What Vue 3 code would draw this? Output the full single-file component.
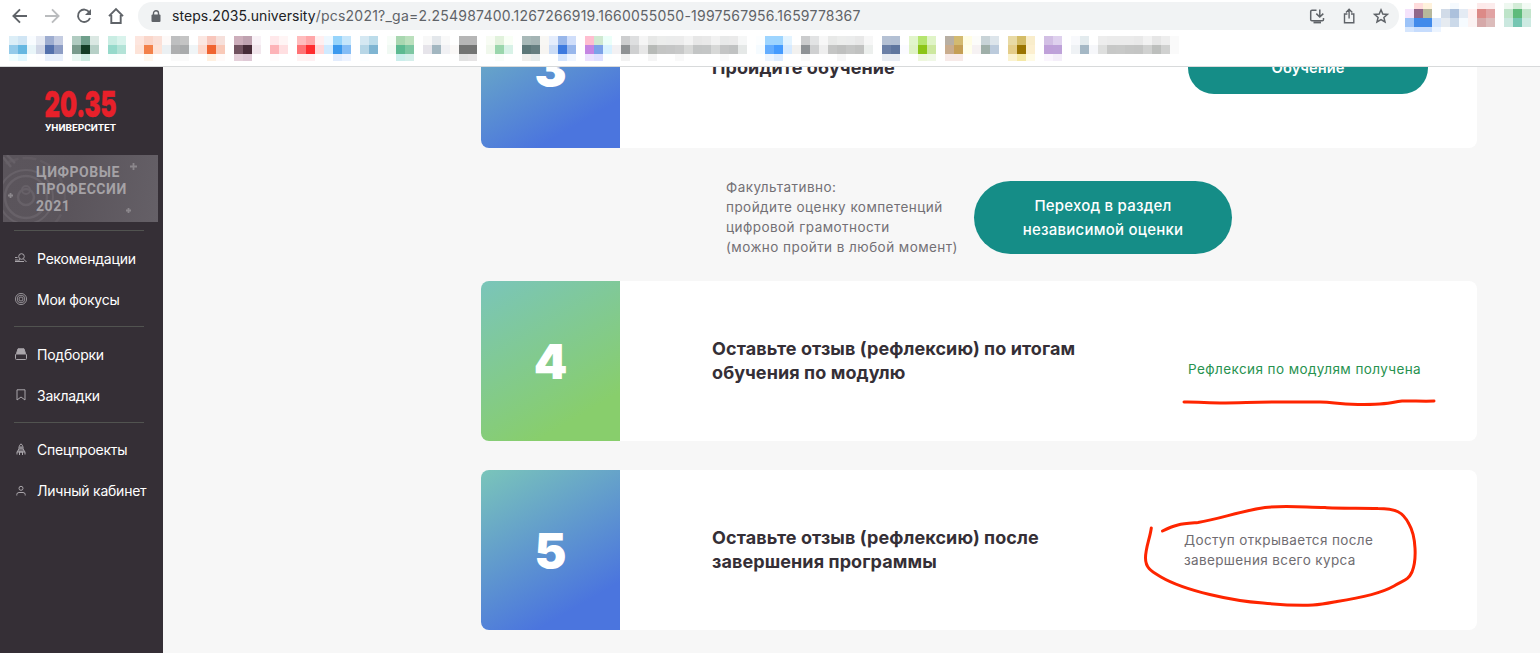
<script setup>
// Each entry: column index, then the colours of its rows ('-' is an empty cell).
const bookmarks = `1 dceef7 94cbea f0feff|2 d0e5f4 66b7e1 e1f7ff|3 f9fcff e9f5f9|4 e5e9f2 d0d6e6 fdfdff|5 9eadd0 5471ad e7effc|6 c5cde2 8d9dc5 e8effb|8 b1ccc1 799b8c e9f7f2|9 70a08c 133d25 cdebe1|10 dbe8e3 b7d0c7|12 c9ede3 96dacb f8fffd|13 d9f3ec b3e3d7 fafffd|15 fde6df fde3d8|16 fad6ca f3814a fff7ee|17 fae0d8 fde3d8|18 fdf9f8 ebf0f3|19 bebfc0 aeafb0 fafafa|20 c4c4c4 a9abac fafafa|21 ffffff f0f5f7|22 fbe7e2 fdd9cd|23 f8c6bb f06430 fff0e0|24 f6e0db f9c9b8 fffaf9|26 cdaebb 715360 e5d0da|27 bfa2b0 472c38 dfc9d6|28 f9f2f7 f2e7ed|30 ffe8ea fdb3b7 fffbfb|31 fff5f5 ffdfe1|33 ffbcbd ff7274 fff2f2|34 ffa6a8 ff2c2e fff0f2|35 ffeff0 ffd9da|36 eef8ff cfeaff|37 96d4fb 3b99ee e2ecfd|38 c6e6fb 84bdf6 edf3ff|40 d5e8f2 b6d6e6 fbfeff|41 bcdcea 7fb5d2|43 f7fdf8 f0f9f3|44 a8d7b0 5cba91 cbeeec|45 bbe0bd 7dc7a2 d5efeb|47 f8f8f8 e6e4ea|48 e3e7eb a2b6c0|49 f9f9f9 f1f1f4|50 ffffff faf8f7|51 b6b6b6 737473 e2e2e2|52 b6b6b6 737473 e6e4e5|54 f8fcf4 f0f8ec|55 e1f2dc 9ad6ac f9fdf9|56 f9fff6 d8f2e7|58 a8b9b8 5c7778 efeeec|59 a4b4b4 657e80 e5ebeb|60 f8f7f4 f7f5f2|61 e5edfc cbdcf6|62 99b7ea 3d7adf d5e5fd|63 d0defa 98b7ec f0f6ff|65 ffbed0 c585e2 ece2fe|66 cfe9d1 7ca2e8 dfe0ff|67 ecfff9 d9f2ff fdffff|68 ffffff f3f1f3|69 cdcecf 8f9294 f2f2f2|70 dedfe0 cfd0d1|71 f5f5f5 e7e7e7|72 e7e8e7 b7bab7 f5f5f5|73 ecedec c4c5c4|74 ebecec c5c6c6|75 ececec c8c9c9 f9f9f9|76 f3f3f3 d8d9d8|77 e7e7e7 c3c5c5|78 e9e9e9 c4c6c6|79 f2f2f2 d7d8d7|80 e8e9e9 c4c5c5 fafafa|81 eaeaea c0c2c2|82 f6f7f7 e5e8e7|84 fcfeff f5fbff|85 9ed5ff 63adff ebf4ff|86 9dd5ff 449bff ddecff|87 e4f4ff d6eaff|88 ffffff f2f1ef|89 cbcccd 8e9295 f9f9f9|90 e2e3e4 cfd0d1|91 f7f7f7 eeeeee|92 e8e9e8 c4c5c4|93 ecedec bfc0bf f7f7f7|94 ebecec c5c6c5|95 e8e8e8 c1c2c1|96 f7f7f7 ecefed|98 b5c1d4 6b80a7 e8ecf2|99 b3c0d4 5f769f e8ecf3|100 fff fbfbff|101 e2f5cc dff2c5|102 b5e56f 8cc517 eef7dd|103 e0f4c7 cde89f f0f8e6|105 b8afa3 c9ac8d f7eae8|106 d3ba70 c59f55 f7eae8|107 fffde5 ffffec|108 fcfcfa f6f2f3|109 c8d3d7 9fafa9|110 dde5eb bccbdc|112 e8daa5 e4cd89 fbf3d0|113 d4bc66 9a7400 f5e9a7|114 f9edcb fcefcf fffbe5|116 d2bfe4 bfa0d9 faf5fd|117 dfd1ee bea2d9 f4eef9|119 f8f9fc eff2f5|120 e3ebee a5b8c5|121 ffffff f6f7fa|122 ededed dedfde|123 ebebeb c7c8c7|124 ebebeb c8c9c8|125 ebebeb c5c6c5|126 e9e9e9 c4c5c4|127 f2f2f2 d0d1d0|128 e6e6e6 bdbfbd|129 eeeeee d0d1d0|130 fafafa fafafa`
  .split('|').map(s => s.split(' '))
const extensions = `0 - f5e3fb 9cc3f8 d6e6fd|1 ffdcdc 91668a 418aeb c6dcfd|2 fff2dc b7b89c 418aeb c6dcfd|3 - - d6e6fc ecf4ff|4 - d1dbe8 e6ebf1|5 f5fafe acc1dc cbd9e9|6 - e4ebf4 f6fbff|7 - fff0f0 fbf3f3|8 fdeaea dc8a87 d6a9a9|9 fcecec e1a3a3 dcbcbb|11 eef8f0 bee4c9 cbe8df|12 d3ecd7 5fbb7b 76c6b2|13 f2faf4 c3e5cc cdeae2`
  .split('|').map(s => s.split(' '))
function cells(cols, tops, heights) {
  return cols.flatMap(([i, ...rows]) =>
    rows.map((c, r) => ({ x: i * 9, y: tops[r], h: heights[r], c })).filter(o => o.c !== '-'))
}
const bookmarkCells = cells(bookmarks, [0, 9, 18], [9, 9, 7])
const extensionCells = cells(extensions, [0, 6, 15, 24], [6, 9, 9, 5])
const navGroups = [
  [{ icon: 'search', label: 'Рекомендации' }, { icon: 'target', label: 'Мои фокусы' }],
  [{ icon: 'stack', label: 'Подборки' }, { icon: 'bookmark', label: 'Закладки' }],
  [{ icon: 'rocket', label: 'Спецпроекты' }, { icon: 'user', label: 'Личный кабинет' }],
]
</script>

<template>
  <div class="window">
    <header class="browser">
      <div class="address-row">
        <svg class="controls" width="138" height="32" viewBox="0 0 138 32" fill="none" stroke="#5f6368" stroke-width="1.9">
          <path d="M27 16H14M20 9.3L13.4 16L20 22.7" />
          <path d="M45 16H58M52 9.3L58.6 16L52 22.7" stroke="#babcbe" />
          <path d="M89.3 12.2A6.2 6.2 0 1 0 90 18" /><path d="M91 9V15H85Z" fill="#5f6368" stroke="none" />
          <path d="M109 16.2L116 9L123 16.2M111.3 15V23H120.7V15" />
        </svg>
        <div class="url-pill">
          <svg class="lock" width="10" height="13" viewBox="0 0 10 13"><rect x="0.5" y="4.5" width="9" height="7.5" rx="1" fill="#5f6368" /><path d="M2.5 5V3a2.5 2.2 0 0 1 5 0V5" fill="none" stroke="#5f6368" stroke-width="1.4" /></svg>
          <span class="url"><b>steps.2035.university</b>/pcs2021?_ga=2.254987400.1267266919.1660055050-1997567956.1659778367</span>
          <svg class="page-actions" width="84" height="24" viewBox="0 0 84 24" fill="none" stroke="#5f6368" stroke-width="1.5">
            <path d="M8.5 6.2H4a1.3 1.3 0 0 0-1.3 1.3V15.5A1.3 1.3 0 0 0 4 16.8H14.2A1.3 1.3 0 0 0 15.5 15.5V14M11.8 5.5V12.5M8.3 9.6L11.8 13L15.3 9.6" /><path d="M5.5 18.4H13" stroke-width="2" />
            <path d="M39.4 10H36.5V18.7H45.8V10H43M41.1 14.5V5.5M38 8.5L41.1 5.3L44.3 8.5" stroke-width="1.4" />
            <path d="M73 5.8L74.8 10L79.4 10.4L75.9 13.4L77 17.9L73 15.5L69 17.9L70.1 13.4L66.6 10.4L71.2 10Z" />
          </svg>
        </div>
        <svg class="extensions" width="126" height="29" shape-rendering="crispEdges"><rect v-for="(c, k) in extensionCells" :key="k" :x="c.x" :y="c.y" width="9" :height="c.h" :fill="'#' + c.c" /></svg>
      </div>
      <svg class="bookmarks" width="1200" height="25" shape-rendering="crispEdges"><rect v-for="(c, k) in bookmarkCells" :key="k" :x="c.x" :y="c.y" width="9" :height="c.h" :fill="'#' + c.c" /></svg>
    </header>
    <div class="page">
      <aside class="sidebar">
        <svg class="logo" width="80" height="46" viewBox="0 0 80 46">
          <text class="logo-number" x="3.5" y="28" textLength="72" lengthAdjust="spacingAndGlyphs">20.35</text>
          <text class="logo-name" x="4" y="42" textLength="71" lengthAdjust="spacingAndGlyphs">УНИВЕРСИТЕТ</text>
        </svg>
        <div class="banner">
          <svg class="banner-art" width="155" height="67" fill="none" stroke="#676168" stroke-width="2.5">
            <circle cx="23" cy="42" r="8" /><circle cx="23" cy="35" r="4" stroke-width="2" /><circle cx="23" cy="42" r="21" /><circle cx="23" cy="42" r="27" stroke-width="2" /><circle cx="23" cy="42" r="39" stroke-opacity=".55" stroke-dasharray="14 4" />
            <path d="M0 2L8 12M4 0L12 8" />
            <path d="M127 11.5H134M130.5 8V15M5 40.5H10M7.5 38V43M123 55.5H128M125.5 53V58" stroke="#8b878c" stroke-width="1.8" />
          </svg>
          <span>ЦИФРОВЫЕ</span><span>ПРОФЕССИИ</span><span>2021</span>
        </div>
        <nav>
          <ul v-for="(group, g) in navGroups" :key="g">
            <li v-for="item in group" :key="item.label">
              <svg width="14" height="14" viewBox="0 0 14 14" fill="none" stroke="#aaa6ab" stroke-width="1">
                <g v-if="item.icon === 'search'"><circle cx="7.5" cy="4.5" r="2.8" /><path d="M9.5 7L12.5 10M1 9.500H10M1 8H4M1 5.500H3.5" /><path d="M5.5 7L4.5 9.500" /></g>
                <g v-else-if="item.icon === 'target'" stroke-width=".8"><circle cx="7" cy="6" r="5.6" /><circle cx="7" cy="6" r="3.8" /><circle cx="7" cy="6" r="2" /></g>
                <g v-else-if="item.icon === 'stack'"><path d="M2.5 5.5L4 .8H10L11.5 5.5Z" fill="#aaa6ab" /><rect x="1.5" y="6" width="11" height="5.5" rx="1" /></g>
                <path v-else-if="item.icon === 'bookmark'" d="M3 .8H11V11L7 8L3 11Z" />
                <g v-else-if="item.icon === 'rocket'"><path d="M5 9V4Q5.5 2 7 .8Q8.5 2 9 4V9ZM5 6L3 9V11.5M9 6L11 9V11.5M5.5 9V12M8.5 9V12M7 3V9" /><path d="M5 5H9M3 9H11" /></g>
                <g v-else><circle cx="7" cy="4.3" r="2" /><path d="M2.8 11.5V10.5Q2.8 8.5 5 8.5H9Q11.2 8.5 11.2 10.5V11.5" /></g>
              </svg>
              <span>{{ item.label }}</span>
            </li>
          </ul>
        </nav>
      </aside>
      <main>
        <section class="step">
          <div class="number blue">3</div>
          <h2>Пройдите обучение</h2>
          <div class="action"><button class="go">Обучение</button></div>
        </section>
        <div class="optional">
          <p>Факультативно:<br>пройдите оценку компетенций<br>цифровой грамотности<br>(можно пройти в любой момент)</p>
          <button class="assess">Переход в раздел<br>независимой оценки</button>
        </div>
        <section class="step">
          <div class="number green">4</div>
          <h2>Оставьте отзыв (рефлексию) по итогам<br>обучения по модулю</h2>
          <div class="action done">Рефлексия по модулям получена
            <svg class="underline" width="256" height="12" viewBox="1182 396 256 12"><path d="M1184 402C1195 401.5 1200 403 1220 403C1245 403 1250 402 1290 402H1320C1335 402 1335 404.5 1358 404.5C1395 404.5 1390 402 1402 401C1412 400.5 1420 401.5 1434 401" /></svg>
          </div>
        </section>
        <section class="step">
          <div class="number blue">5</div>
          <h2>Оставьте отзыв (рефлексию) после<br>завершения программы</h2>
          <div class="action locked">Доступ открывается после<br>завершения всего курса
            <svg class="loop" width="280" height="106" viewBox="1140 502 280 106"><path d="M1151.3 528C1150 538 1145.5 548 1145.5 558C1145.5 568 1151 571 1161 577C1185 591 1233 601 1263 603C1283 605 1300 605.5 1313 605C1322 604.5 1329 603 1337 601.5C1360 598 1380 594 1394 586C1404 580 1408 580.5 1412 572C1417 560 1416 536 1409 524C1403 512 1396 508.5 1378 508.5C1362 508 1335 508.5 1325 507.5C1300 507 1282 505.5 1265 507.5C1240 511 1220 519 1198 522.5C1181 524 1176 524 1162.5 531" /></svg>
          </div>
        </section>
      </main>
    </div>
  </div>
</template>

<style>
html, body { margin: 0; overflow: hidden; }
</style>
<style scoped>
.window { width: 1540px; height: 653px; display: flex; flex-direction: column; overflow: hidden; background: #f7f7f7; font-family: Inter, "Noto Sans", sans-serif; }
.browser { flex: none; height: 66px; background: #fff; border-bottom: 1px solid #d8dadb; }
.address-row { display: flex; height: 36px; align-items: flex-start; }
.controls { flex: none; }
.url-pill { width: 1261px; height: 28px; margin-top: 2px; border-radius: 14px; background: #f1f3f4; display: flex; align-items: center; flex: none; }
.lock { margin-left: 13px; flex: none; }
.url { margin-left: 11px; font-size: 14px; line-height: 20px; letter-spacing: .225px; color: #5f6368; white-space: nowrap; }
.url b { font-weight: 400; letter-spacing: .05px; color: #202124; }
.page-actions { margin-left: auto; margin-right: 7px; }
.extensions { margin: 3px 0 0 6px; flex: none; }
.bookmarks { display: block; }
.page { flex: 1; min-height: 0; display: flex; overflow: hidden; }
.sidebar { width: 163px; flex: none; background: #352f36; }
.logo { display: block; margin: 22px 0 0 41px; overflow: visible; }
.logo-number { font: 900 36px Inter, sans-serif; fill: #e8202a; stroke: #e8202a; stroke-width: .5px; }
.logo-name { font: 700 9.5px Roboto, sans-serif; fill: #fff; }
.banner { position: relative; width: 122px; height: 58px; margin: 20px 0 0 3px; padding: 9px 0 0 33px; background: linear-gradient(100deg, #5b555c, #5a545b 45%, #656067); display: flex; flex-direction: column; color: #a5a2a6; font: 700 14px/17px Roboto, sans-serif; letter-spacing: .55px; }
.banner span { position: relative; }
.banner-art { position: absolute; left: 0; top: 0; }
nav { padding: 8px 19px 0 14px; }
ul { list-style: none; margin: 0; padding: 7px 0 6px; border-top: 1px solid #515350; height: 82px; }
ul:last-child { padding-top: 6px; }
li { display: flex; align-items: center; height: 41px; gap: 9px; color: #fff; font-size: 14px; letter-spacing: -.23px; white-space: nowrap; }
li svg { flex: none; }
main { padding-left: 318px; width: 996px; }
.step { display: flex; height: 160px; border-radius: 8px; background: #fff; overflow: hidden; margin-bottom: 29px; }
.step:first-child { margin: -79px 0 0; }
.number { width: 139px; display: flex; align-items: center; justify-content: center; color: #fff; font-weight: 900; font-size: 48px; }
.blue { background: linear-gradient(150deg, #7ac5ba, #4b75de 80%); }
.green { background: linear-gradient(150deg, #7ac5ba, #88ce6c 80%); }
h2 { margin: 0 0 0 92px; width: 476px; align-self: center; font-size: 18px; line-height: 24px; letter-spacing: .09px; font-weight: 700; color: #352f36; }
.action { position: relative; align-self: center; font-size: 13.5px; line-height: 20px; letter-spacing: .42px; white-space: nowrap; }
button { border: 0; padding: 0; background: #158d87; color: #fff; font-family: inherit; }
.go { display: block; width: 240px; height: 52px; border-radius: 26px; font-size: 14.7px; font-weight: 600; letter-spacing: 0; }
.optional { height: 133px; display: flex; padding-left: 245px; align-items: center; color: #737075; font-size: 13.5px; line-height: 20px; letter-spacing: .45px; }
.optional p { margin: 4px 0 0; width: 248px; white-space: nowrap; }
.assess { width: 258px; height: 73px; border-radius: 37px; margin-top: 6px; font-size: 15px; line-height: 24px; letter-spacing: .22px; font-weight: 500; }
.done { color: #27924f; margin-top: 16px; }
.locked { color: #6f6c71; margin-left: -4px; letter-spacing: .37px; }
.underline, .loop { position: absolute; overflow: visible; fill: none; stroke: #fe2500; stroke-width: 3; stroke-linecap: round; }
.underline { left: -6px; top: 37px; }
.loop { left: -44px; top: -28px; }
</style>
